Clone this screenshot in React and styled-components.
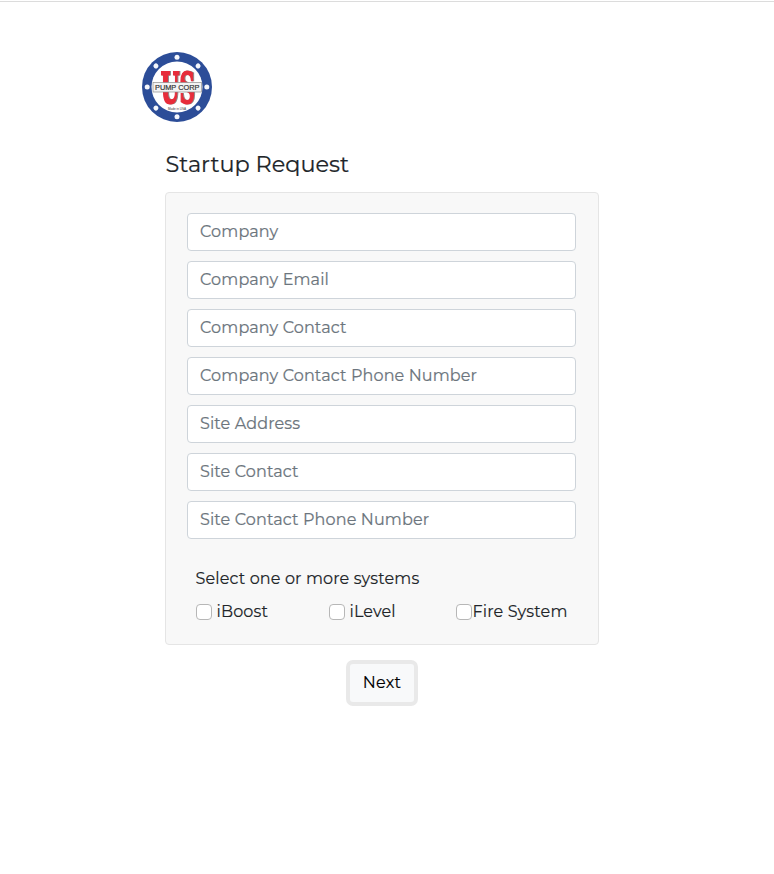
import React from "react";
import styled, { createGlobalStyle } from "styled-components";

const GlobalStyle = createGlobalStyle`
  *, *::before, *::after { box-sizing: border-box; }
  body {
    margin: 0;
    background: #fff;
    color: #212529;
    font: 400 16px/24px Montserrat, Inter, sans-serif;
    letter-spacing: 0.13px;
  }
`;

const Page = styled.main`
  min-height: 874px;
  border-top: 1px solid #fff;
  box-shadow: inset 0 1px 0 #dcdcdc;
`;

const LogoLink = styled.div`
  width: 70px;
  height: 70px;
  margin: 51px 0 0 142px;
  letter-spacing: 0;
  svg { display: block; }
`;

const UsLetters = styled.text`
  font: 700 43px "DejaVu Serif", serif;
  fill: #e72d3b;
  stroke: #e72d3b;
  stroke-width: 2px;
  filter: drop-shadow(1.5px 0.7px 0 #8d8d8d);
`;

const Form = styled.form`
  width: 434px;
  margin: 28px 0 0 165px;
  display: flex;
  flex-direction: column;
`;

const Title = styled.h1`
  margin: 0 0 14px 0.5px;
  font-size: 22.4px;
  line-height: 28px;
  font-weight: 400;
  letter-spacing: 0;
  -webkit-text-stroke: 0.2px currentColor;
  white-space: nowrap;
`;

const Card = styled.section`
  height: 453px;
  padding: 20px 22px 0 21px;
  background: #f8f8f8;
  border: 1px solid #e5e5e5;
  border-radius: 4px;
`;

const Fields = styled.div`
  display: grid;
  gap: 10px;
`;

const Field = styled.input`
  display: block;
  width: 100%;
  height: 38px;
  padding: 5px 12px 7px;
  background: #fff;
  border: 1px solid #ced4da;
  border-radius: 4px;
  color: #495057;
  font: inherit;
  letter-spacing: inherit;
  &::placeholder {
    color: #6c757d;
    opacity: 1;
    -webkit-text-stroke: 0.2px #6c757d;
  }
`;

const Prompt = styled.p`
  margin: 28px 0 9px 8.5px;
  -webkit-text-stroke: 0.15px currentColor;
`;

const Systems = styled.div`
  display: grid;
  grid-template-columns: 133px 127px 1fr;
  margin-left: 9px;
`;

const Option = styled.label`
  display: flex;
  align-items: center;
  gap: ${(p) => p.$gap}px;
  -webkit-text-stroke: 0.15px currentColor;
  white-space: nowrap;
`;

const Checkbox = styled.input`
  appearance: none;
  flex: none;
  width: 16px;
  height: 16px;
  margin: 0 0 1px;
  background: #fff;
  border: 1px solid #b7b7b7;
  border-radius: 4px;
`;

const NextButton = styled.button`
  align-self: center;
  width: 72px;
  height: 46px;
  margin-top: 15px;
  padding: 0 0 1px;
  background: #f8f9fa;
  border: 4px solid #e9e9e9;
  border-radius: 7px;
  color: #000;
  font: inherit;
  letter-spacing: 0.25px;
  -webkit-text-stroke: 0.15px currentColor;
`;

const fields = [
  "Company",
  "Company Email",
  "Company Contact",
  "Company Contact Phone Number",
  "Site Address",
  "Site Contact",
  "Site Contact Phone Number",
];

const systems = [
  ["iBoost", 4.5],
  ["iLevel", 4.5],
  ["Fire System", 0.5],
];

const bolts = [0, 45, 90, 135, 180, 225, 270, 315];

function Logo() {
  return (
    <svg width="70" height="70" viewBox="0 0 70 70" role="img" aria-label="US Pump Corp">
      <circle cx="35" cy="35" r="35" fill="#2c4d98" />
      <circle cx="35" cy="35" r="25.5" fill="#fff" />
      {bolts.map((a) => (
        <circle key={a} cx="35" cy="5.2" r="2.5" fill="#f5f7fc" transform={`rotate(${a} 35 35)`} />
      ))}
      <UsLetters x="18.8" y="51" textLength="34" lengthAdjust="spacingAndGlyphs">US</UsLetters>
      <rect x="11" y="30.5" width="48.5" height="9.5" fill="#f3f3f3" stroke="#8d8d8d" strokeWidth=".7" />
      <text x="13" y="38" textLength="44.5" lengthAdjust="spacingAndGlyphs" fontFamily="Liberation Sans, sans-serif" fontSize="7.5" fill="#333" stroke="#333" strokeWidth=".2">PUMP CORP</text>
      <text x="26" y="57.5" textLength="18" lengthAdjust="spacingAndGlyphs" fontFamily="Liberation Sans, sans-serif" fontSize="3.5" fill="#333">Made in USA</text>
    </svg>
  );
}

export default function App() {
  return (
    <>
      <GlobalStyle />
      <Page>
        <LogoLink><Logo /></LogoLink>
        <Form>
          <Title>Startup Request</Title>
          <Card>
            <Fields>
              {fields.map((label) => (
                <Field key={label} placeholder={label} />
              ))}
            </Fields>
            <Prompt>Select one or more systems</Prompt>
            <Systems>
              {systems.map(([label, gap]) => (
                <Option key={label} $gap={gap}>
                  <Checkbox type="checkbox" />
                  {label}
                </Option>
              ))}
            </Systems>
          </Card>
          <NextButton type="button">Next</NextButton>
        </Form>
      </Page>
    </>
  );
}
